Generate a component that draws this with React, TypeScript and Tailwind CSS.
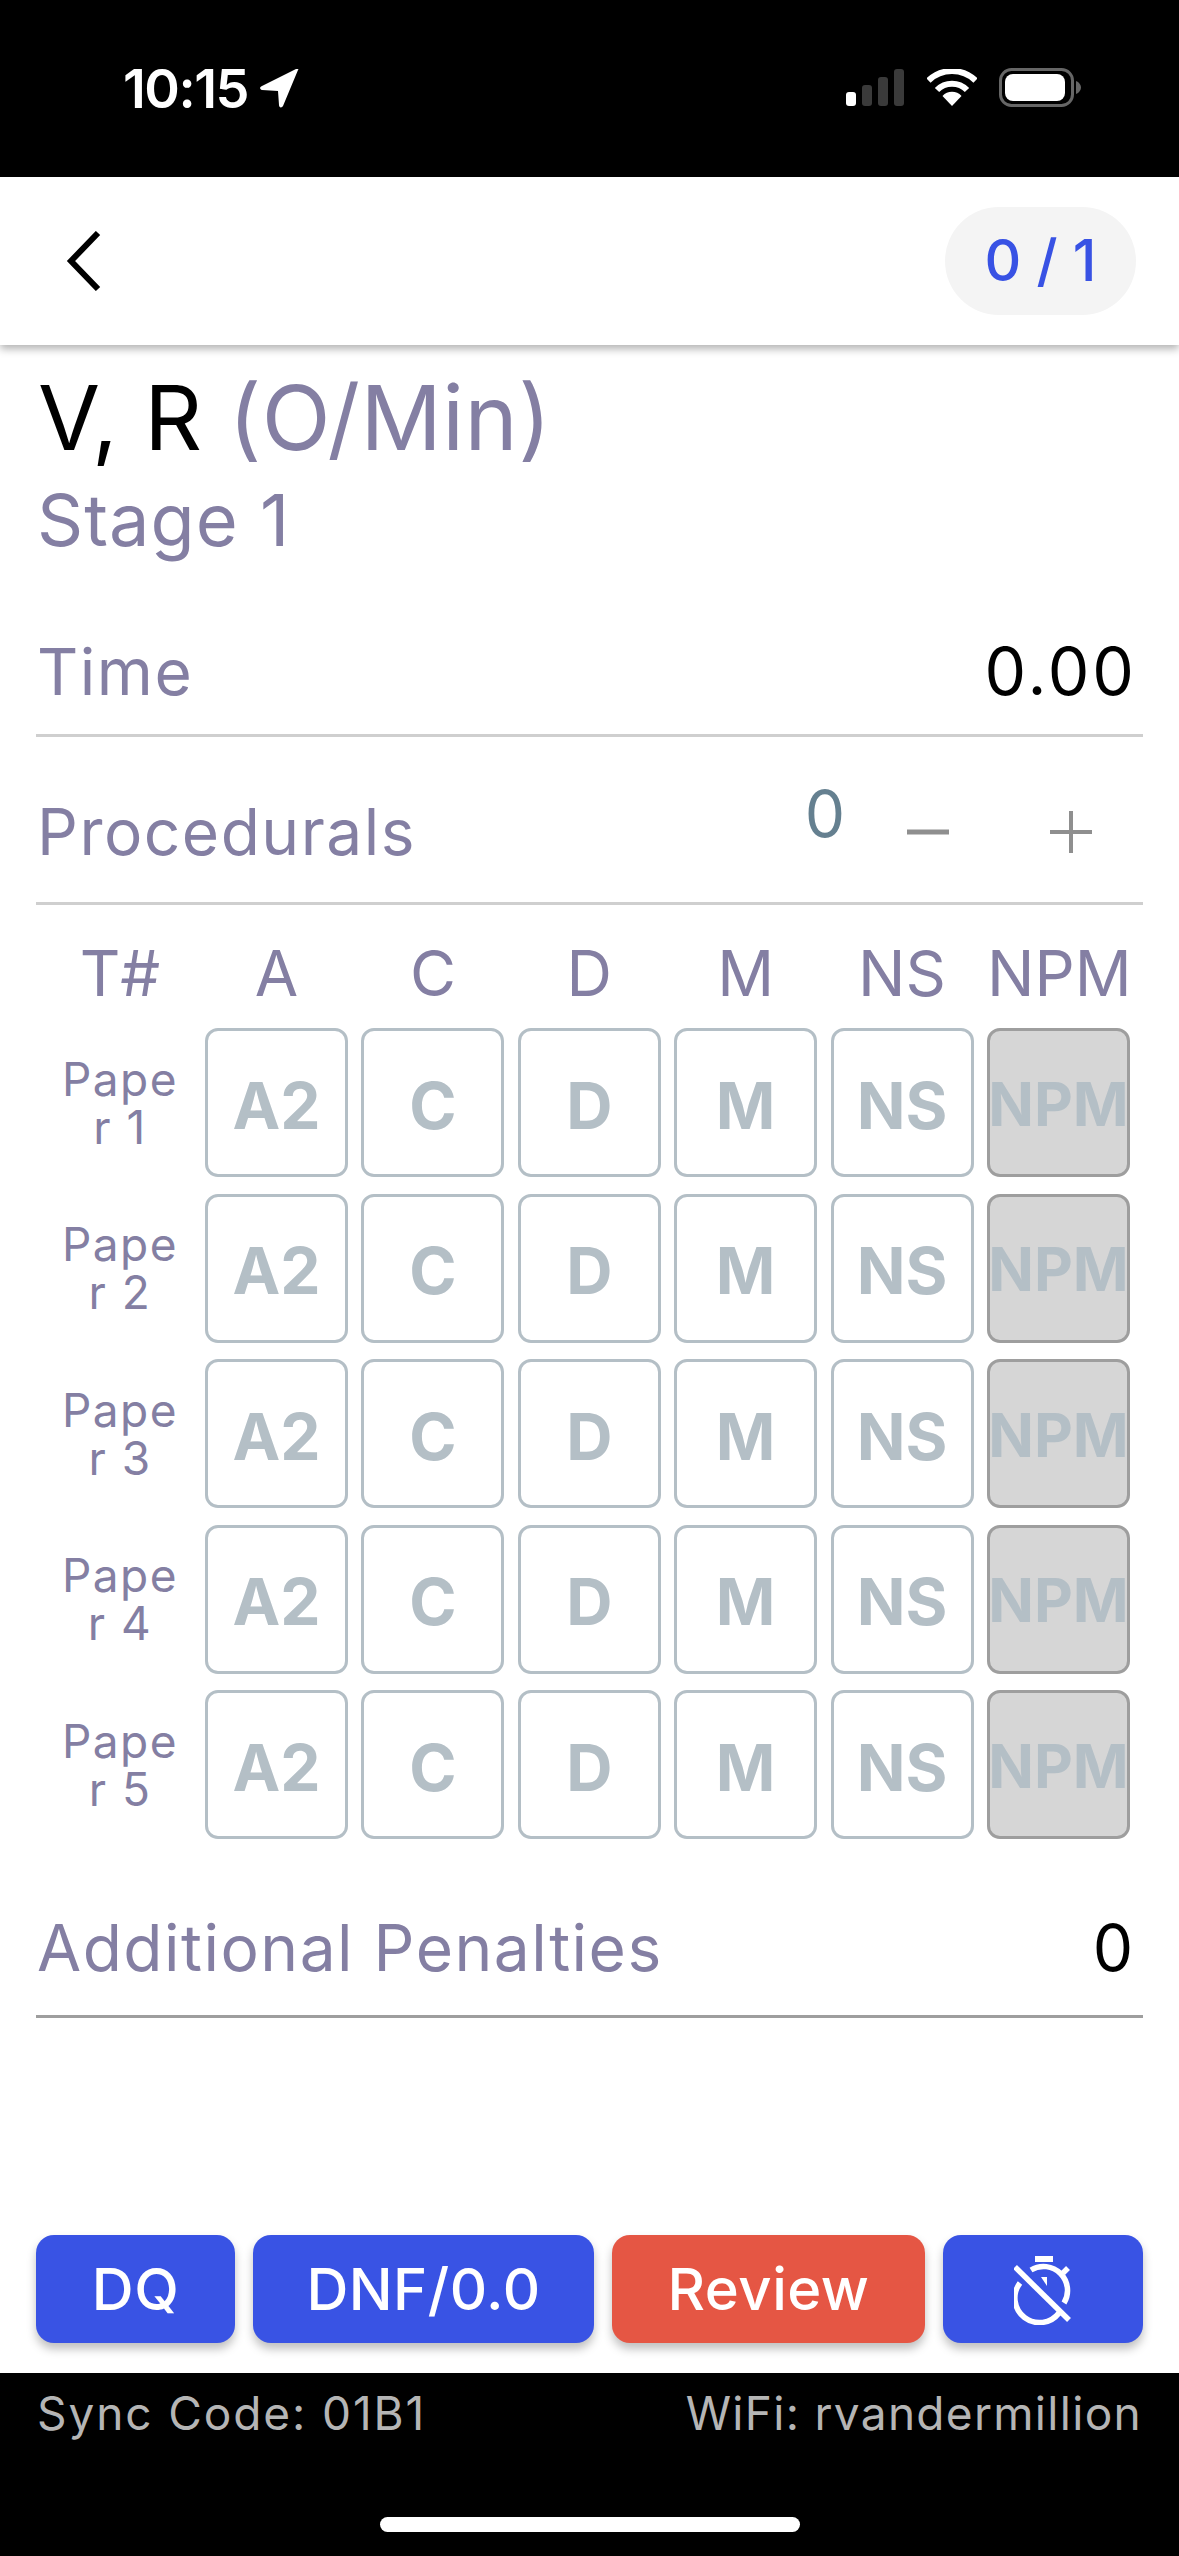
const inter = "font-['Inter',sans-serif]";

const columns = ["A", "C", "D", "M", "NS", "NPM"];
const cells = ["A2", "C", "D", "M", "NS"];
const papers = ["Paper 1", "Paper 2", "Paper 3", "Paper 4", "Paper 5"];

function StatusIcons() {
  return (
    <div className="flex items-start">
      <svg width="58" height="37" viewBox="0 0 58 37" className="mt-[7px]">
        <rect x="0" y="23" width="10" height="14" rx="3" fill="#fff" />
        <rect x="16" y="16" width="10" height="21" rx="3" fill="#3a3a3a" />
        <rect x="32" y="8" width="10" height="29" rx="3" fill="#3a3a3a" />
        <rect x="48" y="0" width="10" height="37" rx="3" fill="#3a3a3a" />
      </svg>
      <svg width="50" height="37" viewBox="0 0 50 37" className="ml-[23px] mt-[7px]">
        <path d="M1.5 11.5 A34 34 0 0 1 48.5 11.5" fill="none" stroke="#fff" stroke-width="6" />
        <path d="M10 21 A21 21 0 0 1 40 21" fill="none" stroke="#fff" stroke-width="6" />
        <path d="M15.5 27 A13 13 0 0 1 34.5 27 L25 37 Z" fill="#fff" />
      </svg>
      <svg width="82" height="39" viewBox="0 0 82 39" className="ml-[22px] mt-[6px]">
        <rect x="1.5" y="1.5" width="72" height="36" rx="11" fill="none" stroke="#666" stroke-width="3" />
        <rect x="6" y="6" width="60" height="27" rx="8" fill="#fff" />
        <path d="M77 13 C80 14 82 17 82 19.5 C82 22 80 25 77 26 Z" fill="#666" />
      </svg>
    </div>
  );
}

function StatusBar() {
  return (
    <div className="h-[177px] shrink-0 bg-black flex items-start justify-between pt-[62px] pl-[123px] pr-[98px]">
      <div className="flex items-start">
        <span className={`${inter} text-white text-[54px] leading-[54px] font-semibold tracking-[-1.5px]`}>10:15</span>
        <svg width="40" height="39" viewBox="0 0 40 39" className="ml-[12px] mt-[7px]">
          <path d="M38 1 L23 37 C22 39 19 39 19 36 L18 22 L2 21 C0 21 -1 18 2 17 L36 0 C38 -1 39 0 38 1 Z" fill="#fff" />
        </svg>
      </div>
      <StatusIcons />
    </div>
  );
}

function NavBar() {
  return (
    <div className="h-[168px] shrink-0 bg-white flex items-center justify-between pl-[66px] pr-[43px] shadow-[0_4px_8px_rgba(0,0,0,0.3)] relative">
      <svg width="36" height="60" viewBox="0 0 36 60">
        <path d="M32 2 L5 30 L32 58" fill="none" stroke="#000" stroke-width="6" />
      </svg>
      <div className={`${inter} w-[191px] h-[108px] rounded-full bg-[#f4f4f4] flex items-center justify-center text-[#3852e4] text-[57px] font-medium`}>
        0 / 1
      </div>
    </div>
  );
}

function Row({ label, children, className }: { label: string; children: React.ReactNode; className: string }) {
  return (
    <div className={`mx-[36px] flex items-center justify-between pl-[1px] pr-[10px] ${className}`}>
      <span className="text-[#847fa3] text-[64px] tracking-[1.5px]">{label}</span>
      {children}
    </div>
  );
}

function Cell({ label, disabled }: { label: string; disabled?: boolean }) {
  if (disabled) {
    return (
      <div className="w-[143px] h-[149px] rounded-[13px] border-[3px] border-[#9e9e9e] bg-[#d6d6d6] flex items-center justify-center pt-[2px]">
        <span className="text-[#b4bfc6] text-[60px] font-bold whitespace-nowrap">{label}</span>
      </div>
    );
  }
  return (
    <div className="w-[143px] h-[149px] rounded-[13px] border-[3px] border-[#b4bfc6] bg-white flex items-center justify-center pt-[6px]">
      <span className="text-[#b4bfc6] text-[64px] font-bold">{label}</span>
    </div>
  );
}

function TimerOffIcon() {
  return (
    <svg width="60" height="72" viewBox="0 0 60 72" fill="none" stroke="#fff" stroke-width="5.5" className="ml-[2px]">
      <path d="M21 6 H39" stroke-width="6" />
      <path d="M17 17 A24 24 0 0 1 50 50" />
      <path d="M45 60 A24 24 0 0 1 6 30" />
      <path d="M1 14 L55 67" />
      <path d="M49 20 L54 15" />
      <path d="M27 24 H33 V33 Z" fill="#fff" stroke="none" />
    </svg>
  );
}

function ActionButton({ children, className }: { children: React.ReactNode; className: string }) {
  return (
    <div className={`h-[108px] rounded-[18px] flex items-center justify-center text-white text-[58px] font-medium tracking-[0.5px] shadow-[0_6px_10px_rgba(0,0,0,0.25)] ${className}`}>
      {children}
    </div>
  );
}

export default function App() {
  return (
    <div className={`${inter} w-[1179px] h-[2556px] bg-white flex flex-col overflow-hidden`}>
      <StatusBar />
      <NavBar />

      <div className="pl-[38px] mt-[28px] h-[90px] leading-[90px] text-[90px] text-black tracking-[0.5px]">
        V, R <span className="text-[#847fa3]">(O/Min)</span>
      </div>
      <div className="pl-[37px] mt-[23px] h-[68px] leading-[68px] text-[72px] text-[#847fa3] tracking-[1px]">Stage 1</div>

      <Row label="Time" className="mt-[55px] h-[128px] border-b-[3px] border-[#cfcfcf]">
        <span className="text-black text-[66px] tracking-[3px] -mr-[4px]">0.00</span>
      </Row>

      <Row label="Procedurals" className="mt-[25px] h-[143px] border-b-[3px] border-[#cfcfcf]">
        <div className="flex items-center">
          <span className="text-[#658090] text-[64px] -mt-[36px]">0</span>
          <svg width="42" height="42" viewBox="0 0 42 42" className="ml-[62px]">
            <path d="M0 21 H42" stroke="#8f8f8f" stroke-width="5" />
          </svg>
          <svg width="42" height="42" viewBox="0 0 42 42" className="ml-[101px] mr-[41px]">
            <path d="M0 21 H42 M21 0 V42" stroke="#8f8f8f" stroke-width="4" />
          </svg>
        </div>
      </Row>

      <div className="mt-[14px] h-[109px] pl-[42px] flex items-center text-[#847fa3] text-[63px]">
        <div className="w-[156px] text-center">T#</div>
        <div className="ml-[7px] flex gap-[13.4px]">
          {columns.map((c) => (
            <div key={c} className="w-[143px] text-center whitespace-nowrap">{c}</div>
          ))}
        </div>
      </div>

      <div className="flex flex-col gap-[16.5px]">
        {papers.map((p) => (
          <div key={p} className="pl-[42px] flex items-center">
            <div className="w-[156px] px-[15px] text-center text-[#847fa3] text-[46px] leading-[48px] tracking-[1.5px] break-all">{p}</div>
            <div className="ml-[7px] flex gap-[13.4px]">
              {cells.map((c) => (
                <Cell key={c} label={c} />
              ))}
              <Cell label="NPM" disabled />
            </div>
          </div>
        ))}
      </div>

      <Row label="Additional Penalties" className="mt-[41px] h-[138px] border-b-[3px] border-[#9e9e9e]">
        <span className="text-black text-[64px]">0</span>
      </Row>

      <div className="mt-auto mb-[30px] mx-[36px] flex gap-[18px]">
        <ActionButton className="w-[199px] bg-[#3953e4]">DQ</ActionButton>
        <ActionButton className="w-[341px] bg-[#3953e4]">DNF/0.0</ActionButton>
        <ActionButton className="w-[313px] bg-[#e55644]">Review</ActionButton>
        <ActionButton className="w-[200px] bg-[#3953e4]"><TimerOffIcon /></ActionButton>
      </div>

      <div className="h-[183px] shrink-0 bg-black flex flex-col">
        <div className="mt-[13px] px-[37px] flex justify-between text-[#b5b5b5] text-[46px] leading-[54px]">
          <span className="tracking-[1.9px]">Sync Code: 01B1</span>
          <span className="tracking-[1.3px]">WiFi: rvandermillion</span>
        </div>
        <div className="mt-auto mb-[24px] mx-auto w-[420px] h-[15px] rounded-full bg-white" />
      </div>
    </div>
  );
}
